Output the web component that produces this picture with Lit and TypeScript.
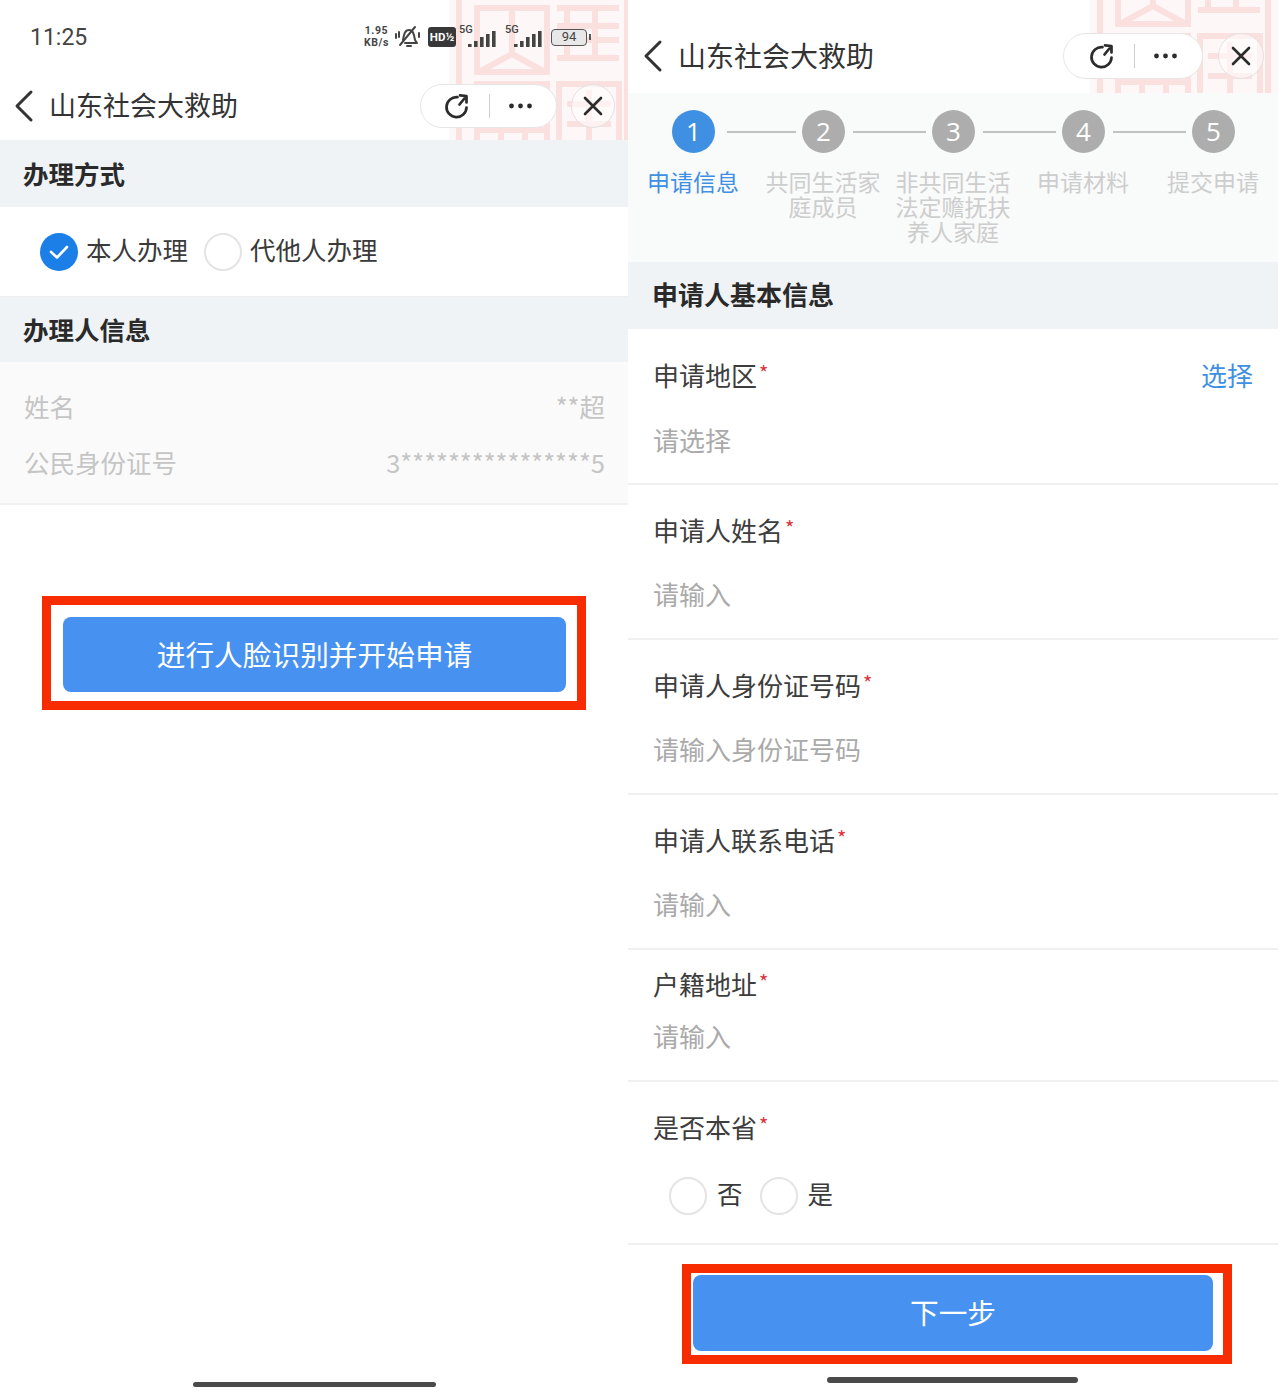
import { LitElement, html, css, svg } from 'lit';
import { customElement } from 'lit/decorators.js';

const seal = () => html`
  <div class="seal">
    <svg width="190" height="190" viewBox="0 0 190 190" fill="none" stroke="#fae0df" stroke-width="6">
      ${svg`
        <path d="M10 0V190M178 0V190" stroke-width="6"/>
        <rect x="28" y="8" width="70" height="64"/>
        <path d="M63 10V54L30 72M63 54L96 72"/>
        <path d="M108 8H170M108 26H170M108 40H170M108 58H170M118 8V58M146 8V58"/>
        <rect x="110" y="84" width="60" height="100"/>
        <path d="M118 104H162M118 124H162M118 144H162M140 90V180"/>
        <rect x="28" y="84" width="70" height="100"/>
        <path d="M28 130H98M52 130V184M76 130V184"/>
      `}
    </svg>
  </div>
`;

const nav = () => html`
  <div class="nav">
    <svg class="back" width="20" height="34" viewBox="0 0 20 34" fill="none" stroke="#333" stroke-width="3" stroke-linecap="round" stroke-linejoin="round">
      <path d="M17 3L3 17L17 31"/>
    </svg>
    <div class="title">山东社会大救助</div>
    <div class="capsule">
      <svg width="28" height="28" viewBox="0 0 28 28" fill="none" stroke="#2b2b2b" stroke-width="2.7" stroke-linecap="round" stroke-linejoin="round">
        <path d="M14.5 5.2A10 10 0 1 0 23.5 15.5"/>
        <path d="M17 3.4L23.5 4L23.5 10.5M16.5 12.5L23 4.5"/>
      </svg>
      <span class="divider"></span>
      <svg width="25" height="6" viewBox="0 0 25 6" fill="#2b2b2b">
        <circle cx="3.5" cy="3" r="2.4"/><circle cx="12.5" cy="3" r="2.4"/><circle cx="21.5" cy="3" r="2.4"/>
      </svg>
    </div>
    <div class="close">
      <svg width="20" height="20" viewBox="0 0 20 20" fill="none" stroke="#2b2b2b" stroke-width="2.6" stroke-linecap="round">
        <path d="M2 2L18 18M18 2L2 18"/>
      </svg>
    </div>
  </div>
`;

const signal = () => html`
  <svg width="28" height="18" viewBox="0 0 28 18" fill="#444">
    <rect x="0" y="14" width="3.6" height="3"/><rect x="6" y="11" width="3.6" height="6"/>
    <rect x="12" y="7" width="3.6" height="10"/><rect x="18" y="4" width="3.6" height="13"/>
    <rect x="24" y="1" width="3.6" height="16"/>
  </svg>
`;

const radio = (label: string, checked = false) => html`
  <div class="radio-item">
    <span class="radio ${checked ? 'checked' : ''}">
      ${checked ? html`
        <svg width="22" height="18" viewBox="0 0 22 18" fill="none" stroke="#fff" stroke-width="2.6" stroke-linecap="round" stroke-linejoin="round">
          <path d="M3 9L9 14.5L19 4"/>
        </svg>` : ''}
    </span>
    <span class="radio-text">${label}</span>
  </div>
`;

const steps = [
  { n: 1, label: '申请信息' },
  { n: 2, label: '共同生活家庭成员' },
  { n: 3, label: '非共同生活法定赡抚扶养人家庭' },
  { n: 4, label: '申请材料' },
  { n: 5, label: '提交申请' },
];

const fields = [
  { label: '申请地区', value: '请选择', action: '选择', cls: 'tall' },
  { label: '申请人姓名', value: '请输入' },
  { label: '申请人身份证号码', value: '请输入身份证号码' },
  { label: '申请人联系电话', value: '请输入' },
  { label: '户籍地址', value: '请输入', cls: 'compact' },
];

@customElement('app-root')
export class AppRoot extends LitElement {

  static styles = css`
    :host {
      display: flex;
      width: 1280px;
      height: 1397px;
      overflow: hidden;
      background: #fff;
      color: #333;
      font-family: "Noto Sans CJK SC", "Noto Sans", sans-serif;
    }

    .panel {
      position: relative;
      display: flex;
      flex-direction: column;
      box-sizing: border-box;
      height: 100%;
    }
    .left { width: 628px; }
    .right { width: 652px; padding: 22px 2px 0 0; }

    .seal {
      position: absolute;
      top: 0;
      height: 140px;
      left: 449px;
      width: 179px;
      overflow: hidden;
      background: #fef7f7;
    }
    .seal svg { display: block; }
    .right .seal { left: 462px; width: 188px; height: 93px; }
    .right .seal svg { margin-top: -48px; }

    .status {
      position: relative;
      display: flex;
      align-items: center;
      height: 72px;
      padding: 2px 37px 0 30px;
      box-sizing: border-box;
      color: #444;
    }
    .time { font-family: Roboto, sans-serif; font-size: 23px; }
    .status-icons { display: flex; align-items: center; margin-left: auto; }
    .speed {
      font-family: Roboto, sans-serif;
      font-size: 10.5px;
      font-weight: 700;
      letter-spacing: 0.6px;
      line-height: 12.5px;
      text-align: center;
      margin-right: 5px;
    }
    .hd {
      font-family: Roboto, sans-serif;
      font-size: 11.5px;
      font-weight: 700;
      color: #fff;
      background: #383838;
      border-radius: 3px;
      width: 28px;
      height: 20px;
      line-height: 20px;
      text-align: center;
      margin: 0 3px 0 6px;
    }
    .net { position: relative; width: 37px; height: 22px; margin-right: 9px; }
    .net b {
      position: absolute;
      left: 0;
      top: -3px;
      font-family: Roboto, sans-serif;
      font-size: 11px;
      font-weight: 500;
    }
    .net svg { position: absolute; right: 0; top: 4px; }
    .battery {
      font-family: Roboto, sans-serif;
      width: 36px;
      height: 17px;
      box-sizing: border-box;
      border: 1.5px solid #555;
      border-radius: 4px;
      background: #e8e8e8;
      font-size: 13px;
      line-height: 14px;
      text-align: center;
    }
    .nub { width: 2px; height: 6px; margin-left: 2px; background: #555; }

    .nav {
      position: relative;
      display: flex;
      align-items: center;
      height: 68px;
      padding: 0 13px 0 14px;
      box-sizing: border-box;
    }
    .right .nav { height: 71px; padding: 0 14px 3px 15px; }
    .title { font-size: 27px; line-height: 36px; margin: -3px 0 0 15px; color: #333; }
    .right .title { font-size: 28px; }
    .capsule {
      display: flex;
      align-items: center;
      gap: 18px;
      margin-left: auto;
      height: 44px;
      padding: 0 23px 0 22px;
      background: #fff;
      border: 1px solid #e6e6e6;
      box-sizing: border-box;
      border-radius: 22px;
    }
    .right .capsule { height: 46px; border-radius: 23px; padding: 0 24px 0 24px; }
    .divider { width: 1px; height: 24px; background: #ccc; }
    .close {
      display: flex;
      align-items: center;
      justify-content: center;
      width: 44px;
      height: 44px;
      margin-left: 14px;
      box-sizing: border-box;
      border: 1px solid #e6e0e0;
      border-radius: 50%;
      background: rgba(255, 255, 255, 0.55);
    }
    .right .close { width: 46px; height: 46px; margin-left: 15px; }

    .section-title {
      position: relative;
      height: 67px;
      padding-left: 23px;
      background: #eff3f6;
      font-size: 25.5px;
      font-weight: 700;
      line-height: 65px;
      color: #2a2a2a;
    }
    .left .second { height: 65px; border-top: 1px solid #eee; line-height: 64px; }
    .right .section-title { height: 67px; padding-left: 24px; font-size: 26px; line-height: 64px; }

    .radio-row {
      display: flex;
      align-items: center;
      gap: 16px;
      height: 89px;
      padding-left: 40px;
      font-size: 25.5px;
      color: #3a3a3a;
    }
    .radio-item { display: flex; align-items: center; gap: 8px; }
    .radio-text { margin-top: -6px; }
    .radio {
      display: flex;
      align-items: center;
      justify-content: center;
      width: 38px;
      height: 38px;
      box-sizing: border-box;
      border: 2px solid #e4e4e4;
      border-radius: 50%;
    }
    .radio.checked { border: 0; background: #1c7fe8; }

    .info {
      display: flex;
      flex-direction: column;
      gap: 20px;
      height: 143px;
      padding: 26px 23px 0 24px;
      box-sizing: border-box;
      background: #fafafa;
      border-bottom: 2px solid #f0f0f0;
      font-size: 25.5px;
      line-height: 36px;
      color: #c5c5c5;
    }
    .info-row { display: flex; justify-content: space-between; }

    .outline {
      box-sizing: border-box;
      border: 9px solid #f72c00;
      background: #fff;
    }
    .left .outline {
      width: 544px;
      height: 114px;
      margin: 91px 0 0 42px;
      padding: 12px 11px 9px 12px;
    }
    .right .outline {
      width: 550px;
      height: 100px;
      margin: 19px 0 0 54px;
      padding: 2px 10px 4px 2px;
    }
    .btn {
      display: flex;
      align-items: center;
      justify-content: center;
      box-sizing: border-box;
      height: 100%;
      padding-bottom: 2px;
      background: #4791f0;
      border-radius: 8px;
      color: #fff;
      font-size: 28.7px;
    }
    .right .btn { padding-bottom: 4px; }

    .home {
      height: 5px;
      margin-top: auto;
      background: #4a4a4a;
      border-radius: 3px;
    }
    .left .home { width: 243px; margin: auto 0 10px 193px; }
    .right .home { width: 251px; height: 6px; margin: 13px 0 0 199px; }

    .steps {
      position: relative;
      height: 169px;
      padding-top: 17px;
      box-sizing: border-box;
      background: #f9fafa;
    }
    .track { display: flex; align-items: center; padding-left: 44px; }
    .dot {
      flex: none;
      width: 43px;
      height: 43px;
      border-radius: 50%;
      background: #adadad;
      color: #fff;
      font-family: "Open Sans", sans-serif;
      font-size: 26px;
      line-height: 43px;
      text-align: center;
    }
    .dot.active { background: #3f90e2; }
    .line { width: 73px; height: 2px; margin: 0 6px 0 8px; background: #c2c2c2; }
    .dot.active + .line { width: 69px; margin-left: 12px; }
    .labels {
      display: grid;
      grid-template-columns: repeat(5, 130px);
      margin-top: 16px;
    }
    .labels div {
      padding: 0 7.5px;
      font-size: 23px;
      line-height: 25px;
      text-align: center;
      color: #cdcdcd;
      word-break: break-all;
    }
    .labels div.active { padding: 0; color: #3f90e2; }

    .field {
      padding: 27px 25px 26px 25px;
      border-bottom: 2px solid #f0f0f0;
      font-size: 26px;
      line-height: 36px;
    }
    .field.tall { padding: 28px 25px 25px 25px; }
    .field.compact { padding: 16px 25px 26px 25px; }
    .field-head { display: flex; justify-content: space-between; color: #3d3d3d; }
    .star { color: #d8343a; font-size: 20px; line-height: 0; vertical-align: 5px; margin-left: 2px; }
    .action { color: #3f90e2; }
    .value { margin-top: 28px; color: #aaa; }
    .tall .value { margin-top: 29px; }
    .compact .value { margin-top: 16px; }
    .radio-field { height: 163px; box-sizing: border-box; padding-bottom: 0; }
    .radio-field .radio-row { height: auto; margin-top: 32px; padding-left: 16px; gap: 17px; }
    .radio-field .radio-item { gap: 10px; }
  `;

  render() {
    return html`
      <div class="panel left">
        ${seal()}
        <div class="status">
          <span class="time">11:25</span>
          <div class="status-icons">
            <div class="speed">1.95<br />KB/s</div>
            <svg width="28" height="24" viewBox="0 0 28 24" fill="none" stroke="#444" stroke-width="2" stroke-linecap="round" stroke-linejoin="round">
              <path d="M9 15C10 9 11 5 15 5C19 5 20 9 21 15L23 18H11"/>
              <path d="M13 21H17M6 20L21 2M2 9V13M5 7V12M25 8V12"/>
            </svg>
            <div class="hd">HD½</div>
            <div class="net"><b>5G</b>${signal()}</div>
            <div class="net"><b>5G</b>${signal()}</div>
            <div class="battery">94</div>
            <span class="nub"></span>
          </div>
        </div>
        ${nav()}
        <div class="section-title">办理方式</div>
        <div class="radio-row">
          ${radio('本人办理', true)}
          ${radio('代他人办理')}
        </div>
        <div class="section-title second">办理人信息</div>
        <div class="info">
          <div class="info-row"><span>姓名</span><span>**超</span></div>
          <div class="info-row"><span>公民身份证号</span><span>3****************5</span></div>
        </div>
        <div class="outline"><div class="btn">进行人脸识别并开始申请</div></div>
        <div class="home"></div>
      </div>

      <div class="panel right">
        ${seal()}
        ${nav()}
        <div class="steps">
          <div class="track">
            ${steps.map((s, i) => html`
              <span class="dot ${i === 0 ? 'active' : ''}">${s.n}</span>
              ${i < steps.length - 1 ? html`<span class="line"></span>` : ''}
            `)}
          </div>
          <div class="labels">
            ${steps.map((s, i) => html`<div class="${i === 0 ? 'active' : ''}">${s.label}</div>`)}
          </div>
        </div>
        <div class="section-title">申请人基本信息</div>
        ${fields.map((f) => html`
          <div class="field ${f.cls ?? ''}">
            <div class="field-head">
              <span>${f.label}<span class="star">*</span></span>
              ${f.action ? html`<span class="action">${f.action}</span>` : ''}
            </div>
            <div class="value">${f.value}</div>
          </div>
        `)}
        <div class="field radio-field">
          <div class="field-head"><span>是否本省<span class="star">*</span></span></div>
          <div class="radio-row">
            ${radio('否')}
            ${radio('是')}
          </div>
        </div>
        <div class="outline"><div class="btn">下一步</div></div>
        <div class="home"></div>
      </div>
    `;
  }

}
